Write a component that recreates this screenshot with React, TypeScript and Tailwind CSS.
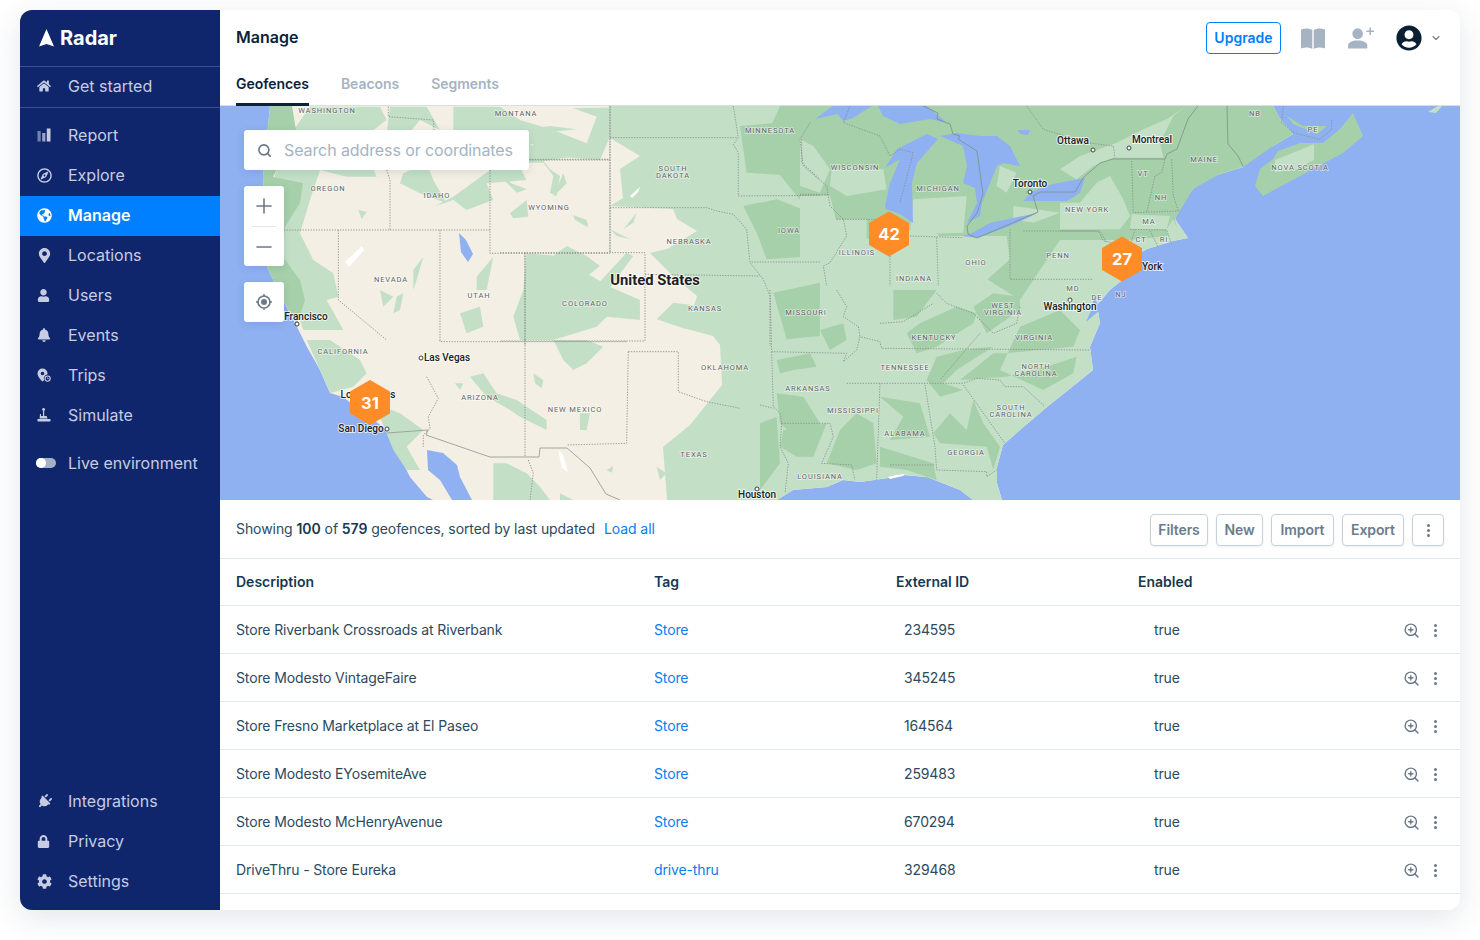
import { type ReactNode } from "react";
import { FaBell, FaCog, FaGlobeAmericas, FaHome, FaLock, FaMapMarkerAlt, FaPlug, FaRegCompass, FaUser, FaUserCircle } from "react-icons/fa";
import { ChevronDown, Minus, Plus, Search, ZoomIn } from "lucide-react";

const UI_FONT = "font-['Inter','Liberation_Sans',sans-serif]";

function ReportIcon() {
  return (
    <svg viewBox="0 0 14 14" className="h-[14px] w-[14px]" fill="currentColor">
      <rect x="0.5" y="3" width="3.2" height="10.5" opacity="0.55" />
      <rect x="5.2" y="5" width="3.2" height="8.5" opacity="0.75" />
      <rect x="9.8" y="0.5" width="3.7" height="13" />
    </svg>
  );
}

function TripsIcon() {
  return (
    <svg viewBox="0 0 14 14" className="h-[14px] w-[14px]" fill="currentColor">
      <path d="M5.5 0.5a5 5 0 0 0-5 5c0 3 3.4 6.6 5 8 .5-.4 1-.9 1.6-1.6a3.9 3.9 0 0 1 3.2-5.4c.1-.3.2-.7.2-1a5 5 0 0 0-5-5zm0 3.2a1.8 1.8 0 1 1 0 3.6 1.8 1.8 0 0 1 0-3.6z" />
      <circle cx="10.6" cy="10.6" r="2.6" fill="none" stroke="currentColor" strokeWidth="1.1" />
      <path d="M10.6 9.3v1.4h1.2" fill="none" stroke="currentColor" strokeWidth="0.8" />
    </svg>
  );
}

function SimulateIcon() {
  return (
    <svg viewBox="0 0 14 14" className="h-[14px] w-[14px]" fill="currentColor">
      <circle cx="6.6" cy="1.5" r="1.4" />
      <rect x="6" y="2" width="1.2" height="6" />
      <path d="M3 6h1v2h5.6l1 2.4H2.6z" />
      <rect x="0.5" y="11" width="13" height="2.5" rx="0.4" />
    </svg>
  );
}

function LocateIcon() {
  return (
    <svg viewBox="0 0 16 16" className="h-4 w-4" fill="#6b7885">
      <circle cx="8" cy="8" r="6" fill="none" stroke="#6b7885" strokeWidth="1.7" />
      <circle cx="8" cy="8" r="3" />
      <path d="M8 0v2M8 14v2M0 8h2M14 8h2" stroke="#6b7885" strokeWidth="1.4" />
    </svg>
  );
}

type NavEntry = { label: string; icon: ReactNode };

const mainNav: NavEntry[] = [
  { label: "Report", icon: <ReportIcon /> },
  { label: "Explore", icon: <FaRegCompass size={15} /> },
  { label: "Manage", icon: <FaGlobeAmericas size={15} /> },
  { label: "Locations", icon: <FaMapMarkerAlt size={15} /> },
  { label: "Users", icon: <FaUser size={13} /> },
  { label: "Events", icon: <FaBell size={14} /> },
  { label: "Trips", icon: <TripsIcon /> },
  { label: "Simulate", icon: <SimulateIcon /> },
];

const bottomNav: NavEntry[] = [
  { label: "Integrations", icon: <FaPlug size={15} className="rotate-45" /> },
  { label: "Privacy", icon: <FaLock size={13} /> },
  { label: "Settings", icon: <FaCog size={15} /> },
];

function NavItem({ label, icon, lift }: NavEntry & { lift?: boolean }) {
  const active = label === "Manage";
  return (
    <div
      className={
        active
          ? "flex h-10 items-center bg-[#0080ff] pb-[2px] pl-4 font-semibold text-white"
          : lift
            ? "flex h-10 items-center pb-[2px] pl-4 text-[#c6cce2]"
            : "flex h-10 items-center pl-4 text-[#c6cce2]"
      }
    >
      <span className="flex w-[32px] items-center justify-start pl-px">{icon}</span>
      <span className="text-base">{label}</span>
    </div>
  );
}

function Sidebar() {
  return (
    <aside className="flex w-[200px] shrink-0 flex-col bg-[#10266c] pb-[9px]">
      <div className="flex h-[57px] items-center gap-[6px] border-b border-[#3d5088] pl-[19px]">
        <svg viewBox="0 0 15 18" className="h-[18px] w-[15px]" fill="white">
          <path d="M7.5 0 15 17.5 7.5 15 0 17.5z" />
        </svg>
        <span className="text-[20px] font-bold leading-none text-white">Radar</span>
      </div>
      <div className="border-b border-[#3d5088]">
        <NavItem label="Get started" icon={<FaHome size={14} />} lift />
      </div>
      <nav className="mt-2">
        {mainNav.map((item) => (
          <NavItem key={item.label} {...item} lift />
        ))}
      </nav>
      <div className="mt-2 flex h-10 items-center pb-[2px] pl-4 text-[#c6cce2]">
        <span className="mr-3 flex h-[10px] w-5 items-center rounded-full bg-[#a4b1c4]">
          <span className="h-[10px] w-[10px] rounded-full bg-white" />
        </span>
        <span className="text-base">Live environment</span>
      </div>
      <nav className="mt-auto">
        {bottomNav.map((item) => (
          <NavItem key={item.label} {...item} />
        ))}
      </nav>
    </aside>
  );
}

function Header() {
  return (
    <header className="h-[96px] shrink-0 border-b border-[#d9dee4] bg-white pl-4 pr-[18px]">
      <div className="flex h-[56px] items-center justify-between pb-[2px]">
        <h1 className="text-base font-semibold text-[#0b2239]">Manage</h1>
        <div className="flex items-center pt-[2px]">
          <button className="h-8 w-[75px] rounded border border-[#0080ff] text-sm font-semibold text-[#0080ff]">Upgrade</button>
          <svg viewBox="0 0 24 22" className="ml-5 h-[22px] w-6" fill="#a6b3c2">
            <path d="M0 2.5c4-1.5 8-1.5 11.3.5v19C8 20 4 20 0 21.5z" />
            <path d="M24 2.5c-4-1.5-8-1.5-11.3.5v19c3.3-2 7.3-2 11.3-.5z" />
          </svg>
          <svg viewBox="0 0 28 22" className="ml-[23px] h-[22px] w-[27px]" fill="#a6b3c2">
            <circle cx="10" cy="6.5" r="5.5" />
            <path d="M0 22v-3c0-3.5 4-5.5 10-5.5s10 2 10 5.5v3z" />
            <path d="M23 0v8M19 4h8" stroke="#a6b3c2" strokeWidth="1.6" fill="none" />
          </svg>
          <FaUserCircle size={26} className="ml-[21px] text-[#0b1f33]" />
          <ChevronDown size={12} strokeWidth={2.2} className="ml-2 text-[#6b7c8c]" />
        </div>
      </div>
      <div className="flex h-[40px] gap-8 text-sm font-semibold tracking-[-0.05px] text-[#a6b3c2]">
        <span className="h-[40px] border-b-[3px] border-[#0b2239] pt-[8px] text-[#0b2239]">Geofences</span>
        <span className="pt-[8px]">Beacons</span>
        <span className="pt-[8px]">Segments</span>
      </div>
    </header>
  );
}

function Hex({ x, y, value }: { x: number; y: number; value: number }) {
  return (
    <g>
      <path
        d={`M${x} ${y - 21.5} L${x + 19} ${y - 10.5} L${x + 19} ${y + 10.5} L${x} ${y + 21.5} L${x - 19} ${y + 10.5} L${x - 19} ${y - 10.5} Z`}
        fill="#ff8c26"
        stroke="#ff8c26"
        strokeWidth="2"
        strokeLinejoin="round"
      />
      <text x={x} y={y + 6} textAnchor="middle" fontSize="16.5" fontWeight="700" fill="white" fontFamily="Inter, sans-serif">
        {value}
      </text>
    </g>
  );
}

const stateLabels: [string, number, number][] = [
  ["WASHINGTON", 327, 113], ["MONTANA", 516, 116], ["MINNESOTA", 770, 133], ["SOUTH", 673, 171], ["DAKOTA", 673, 178],
  ["WISCONSIN", 855, 170], ["MICHIGAN", 938, 191], ["OREGON", 328, 191], ["IDAHO", 437, 198], ["WYOMING", 549, 210],
  ["NEBRASKA", 689, 244], ["IOWA", 789, 233], ["ILLINOIS", 857, 255], ["NEVADA", 391, 282], ["UTAH", 479, 298],
  ["COLORADO", 585, 306], ["KANSAS", 705, 311], ["MISSOURI", 806, 315], ["INDIANA", 914, 281], ["OHIO", 976, 265],
  ["PENN", 1058, 258], ["NEW YORK", 1087, 212], ["MAINE", 1204, 162], ["NOVA SCOTIA", 1300, 170], ["NB", 1255, 116],
  ["PE", 1313, 132], ["VT", 1143, 176], ["NH", 1161, 200], ["MA", 1149, 224], ["CT", 1141, 242], ["RI", 1164, 242],
  ["NJ", 1121, 297], ["DE", 1097, 300], ["MD", 1073, 291], ["WEST", 1003, 308], ["VIRGINIA", 1003, 315],
  ["VIRGINIA", 1034, 340], ["KENTUCKY", 934, 340], ["TENNESSEE", 905, 370], ["NORTH", 1036, 369], ["CAROLINA", 1036, 376],
  ["SOUTH", 1011, 410], ["CAROLINA", 1011, 417], ["GEORGIA", 966, 455], ["ALABAMA", 905, 436], ["MISSISSIPPI", 853, 413],
  ["ARKANSAS", 808, 391], ["LOUISIANA", 820, 479], ["OKLAHOMA", 725, 370], ["TEXAS", 694, 457], ["NEW MEXICO", 575, 412],
  ["ARIZONA", 480, 400], ["CALIFORNIA", 343, 354],
];

const cityLabels: [string, number, number][] = [
  ["Ottawa", 1073, 144], ["Montreal", 1152, 143], ["Toronto", 1030, 187], ["Washington", 1070, 310], ["New York", 1141, 270],
  ["San Diego", 361, 432], ["Las Vegas", 447, 361], ["Francisco", 306, 320], ["Los Angeles", 368, 398], ["Houston", 757, 498],
];

const cityDots: [number, number][] = [[1093, 150], [1129, 148], [1030, 192], [1070, 300], [387, 429], [421, 358], [297, 324], [757, 489]];

// patches below are traced in the coordinates of 3x crops of each map area
const crop5Light = [
  "M270 20 L480 20 L500 60 L420 120 L470 230 L380 230 L300 210 L270 300 L240 400 L280 480 L340 520 L355 590 L320 600 L370 690 L250 690 L220 600 L170 460 L190 300 L160 240 L200 120z",
  "M510 20 L620 20 L660 90 L600 60 L550 120 L590 190 L520 190 L500 100z",
  "M550 220 L620 190 L640 240 L680 310 L600 280 L540 250z",
  "M610 330 L700 300 L740 330 L820 300 L800 250 L920 240 L860 130 L810 210 L700 290 L640 320z",
  "M700 20 L840 20 L900 60 L1000 90 L1100 130 L1130 50 L1060 25 L1260 20 L1260 130 L1170 110 L1140 180 L1020 170 L960 140 L850 100 L810 90 L760 130 L700 100z",
  "M1020 190 L1040 250 L1000 290 L1030 220z",
  "M870 340 L920 300 L925 350 L880 355z",
  "M1060 345 L1100 360 L1105 380 L1065 360z",
  "M920 460 L1040 470 L1100 520 L1170 560 L1260 600 L1260 660 L1160 650 L1130 680 L1000 720 L900 720 L880 650 L910 570z",
  "M720 640 L780 620 L790 680 L740 700z",
  "M580 510 L610 470 L590 540 L580 570z",
  "M480 570 L520 590 L490 620z",
  "M530 590 L550 580 L540 630 L520 640z",
  "M770 530 L820 470 L800 570 L770 570z",
  "M415 330 L440 335 L425 358z",
  "M310 60 L345 60 L340 100 L320 130z",
];

const crop7Light = [
  "M260 0 L330 0 L420 60 L440 100 L400 140 L330 160 L300 90z",
  "M490 200 L540 220 L610 270 L560 320 L600 390 L560 390 L520 330 L480 230z",
  "M750 110 L790 100 L830 160 L890 180 L980 240 L980 270 L900 230 L870 210 L800 170z",
  "M705 130 L730 130 L720 150z",
  "M940 100 L970 120 L965 145 L945 130z",
  "M1000 0 L1100 0 L1150 20 L1100 70 L1060 90 L1030 60z",
  "M820 370 L860 370 L920 400 L960 440 L990 480 L820 480z",
  "M1020 460 L1060 480 L1020 480z",
  "M1160 390 L1180 378 L1175 398z",
  "M1080 220 L1110 220 L1100 270 L1080 270z",
  "M1340 310 L1370 330 L1350 370z",
  "M1310 380 L1340 400 L1320 420z",
];

const crop4Light = [
  "M0 80 L150 60 L230 70 L130 80 L90 120 L170 90 L200 130 L240 110 L230 150 L130 165 L150 190 L180 210 L170 270 L150 260 L160 210 L130 170 L30 170 L30 230 L80 250 L50 260 L0 210z",
  "M215 325 L250 350 L265 365 L240 350z",
  "M330 370 L390 400 L350 390z",
  "M400 350 L370 370 L410 320z",
  "M80 470 L160 450 L200 420 L260 450 L300 480 L250 520 L260 570 L380 440 L400 450 L370 490 L320 560 L280 620 L220 640 L150 680 L130 640 L90 600z",
  "M470 640 L560 670 L600 600 L520 590z",
  "M290 60 L330 40 L300 110z",
];

const crop1Light = [
  "M95 190 L250 190 L260 250 L140 270 L90 240z",
  "M0 270 L90 270 L110 350 L60 460 L0 470z",
  "M340 280 L500 270 L490 380 L330 385z",
  "M100 340 L200 340 L200 440 L150 500 L80 540 L60 470z",
  "M280 390 L620 390 L630 460 L540 540 L270 540z",
  "M640 300 L780 320 L700 350 L640 340z",
  "M0 100 L40 120 L90 190 L60 260 L0 240z",
  "M600 180 L650 200 L620 260 L590 240z",
];

const crop2Light = [
  "M0 190 L60 150 L170 110 L250 70 L320 40 L380 0 L340 30 L300 110 L310 155 L160 155 L100 180 L50 220z",
  "M60 290 L110 230 L150 210 L190 280 L210 330 L180 370 L0 370 L0 290z",
  "M215 325 L330 330 L320 370 L210 370z",
  "M340 340 L360 390 L330 410 L320 370z",
  "M660 140 L760 110 L760 160 L700 180 L640 180z",
  "M40 470 L130 440 L120 490 L60 530 L0 540z",
];

const crop3Dark = [
  "M470 190 L530 170 L640 100 L650 70 L590 50 L480 100 L440 130z",
  "M640 50 L680 130 L780 60 L780 20 L700 10z",
  "M500 270 L530 200 L610 180 L700 170 L590 240 L550 280 L610 300 L540 320z",
  "M780 110 L900 60 L960 120 L940 170 L740 190 L700 190 L600 270 L740 260 L860 230 L950 200 L940 250 L850 300 L720 240z",
  "M200 520 L240 420 L290 370 L340 400 L350 520 L290 540z",
  "M360 320 L480 340 L510 440 L390 450 L430 380z",
  "M360 470 L520 520 L530 570 L440 540 L360 530z",
  "M520 430 L570 370 L620 420 L640 330 L670 400 L720 470 L700 540 L680 470 L540 460z",
  "M50 310 L130 320 L180 400 L150 480 L60 400z",
  "M50 210 L150 190 L170 230 L100 240 L60 250z",
  "M180 120 L250 100 L260 150 L210 180z",
  "M70 420 L200 400 L160 500 L110 500 L60 470z",
  "M400 0 L530 0 L470 80 L400 90z",
  "M0 400 L50 380 L60 520 L0 600z",
];

const crop4Dark = [
  "M730 300 L830 280 L960 330 L960 450 L800 460 L770 380z",
  "M720 60 L960 40 L960 260 L880 210 L740 200z",
  "M820 560 L960 530 L960 690 L860 700z",
];

const crop5Borders = [
  "M505 20 L505 50 L640 60 L650 200", "M500 210 L510 240 L510 390 L190 390", "M510 390 L810 390", "M810 210 L810 460 L1170 460",
  "M1170 20 L1170 460", "M810 180 L1170 180", "M355 390 L355 600 L500 720", "M660 390 L660 720", "M915 460 L915 720",
];

const crop7Borders = [
  "M620 110 L655 175 L625 230 L630 265 L610 285 L610 320", "M660 0 L660 5 L1220 5", "M915 0 L915 350",
  "M1225 35 L1220 310 L1040 315", "M1225 35 L1375 35 L1375 155 L1460 185 L1560 205", "M925 360 L940 400 L930 480",
];

const crop4Borders = [
  "M330 0 L330 440", "M330 95 L710 95", "M330 305 L620 305 L650 315 L700 325 L740 370 L750 470 L790 520 L810 570 L810 720",
  "M0 440 L435 440 L435 705 L0 705", "M75 440 L75 720", "M435 505 L780 510", "M0 160 L330 160", "M700 0 L715 95 L700 115 L715 140 L715 270 L960 268",
  "M755 468 L960 468", "M905 100 L905 170 L960 220",
];

const crop3Borders = [
  "M30 0 L35 185 L260 190 L250 215 L290 180 L300 140 L360 155 L365 175 L990 180", "M35 185 L40 350 L60 370 L65 400 L210 400 L220 440 L185 520 L275 525 L285 570",
  "M65 400 L60 470 L85 520 L75 610", "M260 280 L610 280 L650 265 L720 270 L735 290 L790 290 L855 350", "M360 280 L350 570",
  "M495 285 L525 470 L530 540 L680 545 L680 560 L710 540", "M390 525 L525 525", "M610 285 L735 460", "M230 0 L260 50 L250 80 L295 110 L300 140",
  "M360 100 L430 95 L520 40", "M530 10 L560 40 L640 70 L700 130 L770 100 L780 50", "M660 130 L540 270", "M0 345 L40 355",
];

const crop1Borders = [
  "M150 0 L130 50 L240 90 L270 150 L300 130 L340 140 L300 290", "M30 50 L0 100 L10 180 L80 240 L90 300 L130 340 L140 390 L90 470 L70 480 L80 540",
  "M0 265 L85 265", "M110 340 L230 340", "M330 390 L490 395", "M270 450 L270 540", "M410 395 L415 540", "M630 370 L630 520 L880 520",
  "M670 375 L900 375 L920 410", "M680 0 L730 70 L860 110 L940 120 L945 155",
];

const crop2Borders = [
  "M215 165 L220 320 L355 315", "M315 160 L305 200 L285 210 L260 320", "M335 160 L340 270 L355 315", "M210 370 L320 372 L335 415",
  "M225 370 L210 420 L130 405 L115 375 L0 375", "M270 375 L295 425", "M670 0 L665 50 L700 80 L780 100 L815 70 L815 40",
];

function Patches({ at, paths, fill }: { at: string; paths: string[]; fill: string }) {
  return (
    <g transform={`${at} scale(0.3333)`} fill={fill}>
      {paths.map((d) => (
        <path key={d} d={d} />
      ))}
    </g>
  );
}

function Borders({ at, paths }: { at: string; paths: string[] }) {
  return (
    <g transform={`${at} scale(0.3333)`} fill="none" stroke="#868f89" strokeWidth="2.6" strokeDasharray="4 4">
      {paths.map((d) => (
        <path key={d} d={d} />
      ))}
    </g>
  );
}

const LAND_EDGE =
  "M270 106 L263 177 L267 267 L283 300 L297 327 L307 347 L320 370 L330 393 L343 397 L387 430 L393 447 L403 463 L410 477 L427 497 L433 500 L777 500 L793 490 L827 487 L843 480 L860 482 L888 478 L903 475 L927 477 L960 490 L973 500 L1002 500 L997 483 L997 467 L1003 445 L1020 430 L1047 407 L1077 383 L1093 370 L1090 347 L1100 323 L1097 305 L1110 290 L1121 281 L1140 253 L1147 249 L1173 241 L1188 238 L1175 219 L1180 206 L1193 189 L1207 178 L1220 174 L1243 167 L1240 157 L1252 156 L1273 146 L1293 134 L1280 119 L1273 106z";

const GREEN_EDGE =
  "M610 106 L610 138 L640 156 L620 169 L623 199 L640 188 L610 206 L673 209 L677 219 L697 231 L667 249 L650 253 L673 276 L697 296 L687 329 L713 336 L720 345 L722 385 L690 425 L663 447 L667 500 L777 500 L793 490 L827 487 L843 480 L860 482 L888 478 L903 475 L927 477 L960 490 L973 500 L1002 500 L997 483 L997 467 L1003 445 L1020 430 L1047 407 L1077 383 L1093 370 L1090 347 L1100 323 L1097 305 L1110 290 L1121 281 L1140 253 L1147 249 L1173 241 L1188 238 L1175 219 L1180 206 L1193 189 L1207 178 L1220 174 L1243 167 L1240 157 L1252 156 L1273 146 L1293 134 L1280 119 L1273 106z";

function MapCanvas() {
  return (
    <div className="relative h-[394px] shrink-0 overflow-hidden bg-[#8fb1f2]">
      <svg viewBox="220 106 1240 394" className="block h-full w-full">
        <g className="blur-[0.5px]">
          <path fill="#f4efe4" d={LAND_EDGE} />
          <path fill="#c3e0c7" d={GREEN_EDGE} />
          <Patches at="translate(220 100)" paths={crop5Light} fill="#c3e0c7" />
          <Patches at="translate(220 340)" paths={crop7Light} fill="#c3e0c7" />
          <Patches at="translate(500 106)" paths={crop4Light} fill="#c3e0c7" />
          <path d="M270 106 L292 106 L296 130 L273 177 L303 183 L300 203 L285 227 L283 257 L300 280 L305 300 L297 325 L283 300 L267 267 L263 177z" fill="#a6d0aa" />
          <path d="M780 106 L1198 106 L1273 106 L1280 119 L1293 134 L1273 146 L1243 167 L1220 174 L1193 189 L1175 219 L1178 235 L1130 240 L1060 240 L1020 300 L960 262 L930 225 L870 240 L800 200 L760 150z" fill="#a6d0aa" />
          <Patches at="translate(500 106)" paths={crop4Dark} fill="#a6d0aa" />
          <Patches at="translate(760 290)" paths={crop3Dark} fill="#a6d0aa" />
          <Patches at="translate(800 106)" paths={crop1Light} fill="#c3e0c7" />
          <Patches at="translate(1060 106)" paths={crop2Light} fill="#c3e0c7" />
          <path d="M1255 186 L1263 196 L1287 183 L1313 169 L1343 153 L1363 136 L1353 113 L1340 129 L1323 143 L1300 143 L1278 151 L1273 159 L1260 169z" fill="#a6d0aa" />
          <path d="M1275 160 L1300 150 L1314 144 L1314 160 L1295 170 L1275 172z" fill="#c3e0c7" />
          <path d="M1287 116 L1293 124 L1317 134 L1327 126 L1303 126z" fill="#a6d0aa" />
          <path d="M1428 112 L1438 106 L1442 106 L1436 113z" fill="#c3e0c7" />
          {/* lakes */}
          <g fill="#8fb1f2">
            <path d="M815 119 L833 106 L872 106 L853 118 L843 121 L838 114z" />
            <path d="M878 106 L927 106 L947 123 L930 119 L900 124 L883 116z" />
            <path d="M885 206 L890 183 L900 159 L885 168 L897 149 L927 134 L938 139 L917 163 L912 183 L913 223 L900 214 L886 209z" />
            <path d="M940 136 L957 133 L980 136 L997 136 L1010 146 L1020 166 L1003 163 L997 166 L982 203 L980 216 L967 223 L977 203 L975 188 L963 183 L967 166 L963 146z" />
            <path d="M962 236 L970 234 L990 223 L1013 218 L1038 213 L1010 226 L977 238z" />
            <path d="M1023 201 L1033 191 L1053 184 L1085 178 L1080 193 L1067 201 L1037 201z" />
            <path d="M1018 130 L1030 130 L1028 135 L1020 134z" />
            <path d="M427 450 L443 453 L457 465 L460 477 L472 500 L452 500 L440 480 L428 470z" />
            <path d="M459 233 L466 240 L473 254 L468 262 L461 252z" />
            <path d="M1094 296 L1100 310 L1086 322 L1092 308z" />
          </g>
          <path d="M345 262 L362 246 L364 250 L349 267z" fill="white" />
          <path d="M630 196 L640 187 L638 192 L632 198z" fill="white" />
          <path d="M558 450 L563 455 L568 472 L562 468z" fill="white" />
          <path d="M888 477 L896 475 L905 474 L903 476 L890 479z" fill="white" />
        </g>
        <Borders at="translate(220 100)" paths={crop5Borders} />
        <Borders at="translate(220 340)" paths={crop7Borders} />
        <Borders at="translate(500 106)" paths={crop4Borders} />
        <Borders at="translate(760 290)" paths={crop3Borders} />
        <Borders at="translate(800 106)" paths={crop1Borders} />
        <Borders at="translate(1060 106)" paths={crop2Borders} />
        <path
          d="M387 433 L428 430 L426 435 L490 457 L539 457 L540 448 L567 448 L590 468 L606 494 L620 500"
          fill="none"
          stroke="#989d98"
          strokeWidth="0.9"
        />
        <path
          d="M923 106 L938 113 L937 119 L950 124 L953 134 L960 136 L958 139 L977 151 L983 194 L977 213 L967 226 L968 234 L977 238 L1017 221 L1038 212 L1033 196 L1040 192 L1075 192 L1083 178 L1100 163 L1113 159 L1165 159 L1167 154 L1177 149 L1188 119 L1198 106 M1227 106 L1228 144 L1238 156 L1243 166"
          fill="none"
          stroke="#7d8f85"
          strokeWidth="0.8"
        />
        <g fill="#5f6368" fontSize="7.5" fontFamily="Roboto, sans-serif" letterSpacing="0.9" textAnchor="middle" stroke="#ffffff" strokeOpacity="0.55" strokeWidth="1.6" paintOrder="stroke">
          {stateLabels.map(([text, x, y]) => (
            <text key={`${text}${x}`} x={x} y={y}>
              {text}
            </text>
          ))}
        </g>
        <g fill="none" stroke="#3c4043" strokeWidth="1">
          {cityDots.map(([x, y]) => (
            <circle key={`${x}${y}`} cx={x} cy={y} r="2" fill="white" />
          ))}
        </g>
        <g fill="#202124" fontSize="10" fontWeight="500" fontFamily="Roboto, sans-serif" textAnchor="middle" stroke="#ffffff" strokeOpacity="0.7" strokeWidth="2" paintOrder="stroke">
          {cityLabels.map(([text, x, y]) => (
            <text key={text} x={x} y={y}>
              {text}
            </text>
          ))}
          <text x="655" y="285" fontSize="14.8" fontWeight="700">
            United States
          </text>
        </g>
        <Hex x={889} y={234} value={42} />
        <Hex x={370} y={402.5} value={31} />
        <Hex x={1122} y={259} value={27} />
      </svg>

      <div className="absolute left-6 top-6 flex h-10 w-[285px] items-center rounded-[3px] bg-white pl-[13px] shadow-[0_2px_8px_rgba(20,40,70,0.12)]">
        <Search size={15} strokeWidth={2.6} className="text-[#6b7885]" />
        <span className="ml-3 pb-px text-base tracking-[-0.1px] text-[#a6b3c2]">Search address or coordinates</span>
      </div>
      <div className="absolute left-6 top-20 flex h-20 w-10 flex-col items-center rounded-[3px] bg-white shadow-[0_2px_8px_rgba(20,40,70,0.12)]">
        <span className="flex h-10 items-center">
          <Plus size={24} strokeWidth={1.6} className="text-[#6b7885]" />
        </span>
        <span className="h-px w-6 bg-[#e3e7eb]" />
        <span className="flex flex-1 items-center">
          <Minus size={24} strokeWidth={1.6} className="text-[#6b7885]" />
        </span>
      </div>
      <div className="absolute left-6 top-[176px] flex h-10 w-10 items-center justify-center rounded-[3px] bg-white shadow-[0_2px_8px_rgba(20,40,70,0.12)]">
        <LocateIcon />
      </div>
    </div>
  );
}

function Dots() {
  return (
    <span className="flex flex-col items-center gap-[2px]">
      <span className="h-[3px] w-[3px] rounded-full bg-[#6b7885]" />
      <span className="h-[3px] w-[3px] rounded-full bg-[#6b7885]" />
      <span className="h-[3px] w-[3px] rounded-full bg-[#6b7885]" />
    </span>
  );
}

function ToolButton({ children, width }: { children: ReactNode; width: string }) {
  return (
    <button className={`flex h-8 items-center justify-center rounded border border-[#c4d2dc] text-sm font-semibold tracking-[-0.1px] text-[#6b7c8c] shadow-[0_1px_2px_rgba(20,40,70,0.08)] ${width}`}>
      {children}
    </button>
  );
}

const rows = [
  ["Store Riverbank Crossroads at Riverbank", "Store", "234595"],
  ["Store Modesto VintageFaire", "Store", "345245"],
  ["Store Fresno Marketplace at El Paseo", "Store", "164564"],
  ["Store Modesto EYosemiteAve", "Store", "259483"],
  ["Store Modesto McHenryAvenue", "Store", "670294"],
  ["DriveThru - Store Eureka", "drive-thru", "329468"],
];

function Table() {
  return (
    <div className="flex-1 bg-white text-sm text-[#2c4a60]">
      <div className="flex h-[59px] items-center justify-between border-b border-[#e4e9ee] pl-4 pr-4">
        <p className="tracking-[-0.07px]">
          Showing <b className="font-semibold text-[#17384f]">100</b> of <b className="font-semibold text-[#17384f]">579</b> geofences, sorted by last updated
          <span className="ml-[9px] text-[#0a7cf0]">Load all</span>
        </p>
        <div className="mt-[2px] flex gap-2">
          <ToolButton width="w-[58px]">Filters</ToolButton>
          <ToolButton width="w-[47px]">New</ToolButton>
          <ToolButton width="w-[63px]">Import</ToolButton>
          <ToolButton width="w-[62px]">Export</ToolButton>
          <button className="flex h-8 w-8 items-center justify-center rounded border border-[#c4d2dc] shadow-[0_1px_2px_rgba(20,40,70,0.08)]">
            <Dots />
          </button>
        </div>
      </div>
      <div className="grid h-[47px] grid-cols-[418px_242px_242px_1fr] items-center border-b border-[#e4e9ee] pl-4 pr-4 font-semibold text-[#17384f]">
        <span>Description</span>
        <span>Tag</span>
        <span>External ID</span>
        <span>Enabled</span>
      </div>
      {rows.map(([description, tag, externalId]) => (
        <div key={externalId} className="grid h-12 grid-cols-[418px_242px_242px_1fr] items-center border-b border-[#e4e9ee] pl-4 pr-4 tracking-[-0.13px]">
          <span>{description}</span>
          <span className="text-[#0a7cf0]">{tag}</span>
          <span className="pl-2">{externalId}</span>
          <span className="flex items-center justify-between pl-4">
            true
            <span className="flex items-center gap-[14px] pr-[7px] pt-px">
              <ZoomIn size={17} strokeWidth={2} className="text-[#6b7885]" />
              <Dots />
            </span>
          </span>
        </div>
      ))}
    </div>
  );
}

export default function App() {
  return (
    <div className={`h-[940px] w-[1480px] bg-white px-5 pt-[10px] ${UI_FONT}`}>
      <div className="flex h-[900px] overflow-hidden rounded-xl shadow-[0_8px_30px_rgba(30,50,80,0.12)]">
        <Sidebar />
        <main className="flex min-w-0 flex-1 flex-col bg-white">
          <Header />
          <MapCanvas />
          <Table />
        </main>
      </div>
    </div>
  );
}
